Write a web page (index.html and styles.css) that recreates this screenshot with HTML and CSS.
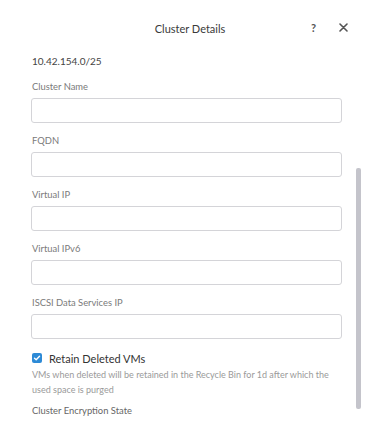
FILE: index.html
```html
<!DOCTYPE html>
<html>
<head>
<meta charset="utf-8">
<link rel="stylesheet" href="styles.css">
</head>
<body>
<div class="dialog">
  <div class="header">
    <div class="title">Cluster Details</div>
    <div class="actions">
      <span class="help">?</span>
      <span class="close">
        <svg width="9" height="9" viewBox="0 0 9 9"><path d="M1 1L8 8M8 1L1 8" stroke="#555" stroke-width="1.6" stroke-linecap="round"/></svg>
      </span>
    </div>
  </div>
  <div class="body">
    <div class="content">
      <div class="subnet">10.42.154.0/25</div>
      <div class="field first">
        <div class="label">Cluster Name</div>
        <div class="input"></div>
      </div>
      <div class="field">
        <div class="label">FQDN</div>
        <div class="input"></div>
      </div>
      <div class="field">
        <div class="label">Virtual IP</div>
        <div class="input"></div>
      </div>
      <div class="field">
        <div class="label">Virtual IPv6</div>
        <div class="input"></div>
      </div>
      <div class="field">
        <div class="label">ISCSI Data Services IP</div>
        <div class="input"></div>
      </div>
      <div class="check-row">
        <span class="checkbox">
          <svg width="8" height="8" viewBox="0 0 8 8"><path d="M1.5 4.2L3.2 5.8L6.5 2.2" stroke="#fff" stroke-width="1.4" fill="none" stroke-linecap="round" stroke-linejoin="round"/></svg>
        </span>
        <span class="check-label">Retain Deleted VMs</span>
      </div>
      <div class="desc">VMs when deleted will be retained in the Recycle Bin for 1d after which the used space is purged</div>
      <div class="label enc">Cluster Encryption State</div>
    </div>
    <div class="scrollbar"></div>
  </div>
</div>
</body>
</html>
```
FILE: styles.css
```css
* { box-sizing: border-box; }
html, body { margin: 0; padding: 0; background: #fff; }
body { font-family: "Lato", "Open Sans", sans-serif; color: #333; }
.dialog { width: 372px; height: 435px; overflow: hidden; }
.header { position: relative; height: 56px; display: flex; align-items: center; justify-content: center; }
.title { font-size: 11px; color: #3a3a3a; margin-left: 8px; }
.actions { position: absolute; right: 24px; top: 21px; display: flex; align-items: center; gap: 23px; }
.help { font-size: 11px; color: #555; font-weight: bold; }
.close { display: flex; align-items: center; }
.body { display: flex; }
.content { width: 342px; padding-left: 31px; }
.subnet { font-size: 10px; color: #444; margin-top: -2px; line-height: 14px; padding-left: 1px; }
.field { margin-top: 12px; }
.field.first { margin-top: 13px; }
.label { font-size: 9.4px; color: #7a7a7a; line-height: 12px; padding-left: 1px; }
.input { margin-top: 5px; height: 25px; border: 1px solid #d4d4d8; border-radius: 3px; background: #fff; }
.check-row { display: flex; align-items: center; margin-top: 12px; height: 14px; }
.checkbox { width: 10px; height: 10px; border-radius: 2px; background: #2d8ad6; display: flex; align-items: center; justify-content: center; margin-left: 1px; }
.check-label { font-size: 11px; color: #333; margin-left: 7px; }
.desc { font-size: 9px; color: #9a9a9a; line-height: 15px; margin-top: 2px; max-width: 304px; padding-left: 1px; }
.enc { margin-top: 8px; color: #666; }
.scrollbar { width: 5px; height: 241px; background: #c4c4cb; border-radius: 2px; margin-top: 112px; margin-left: 14px; }
```
